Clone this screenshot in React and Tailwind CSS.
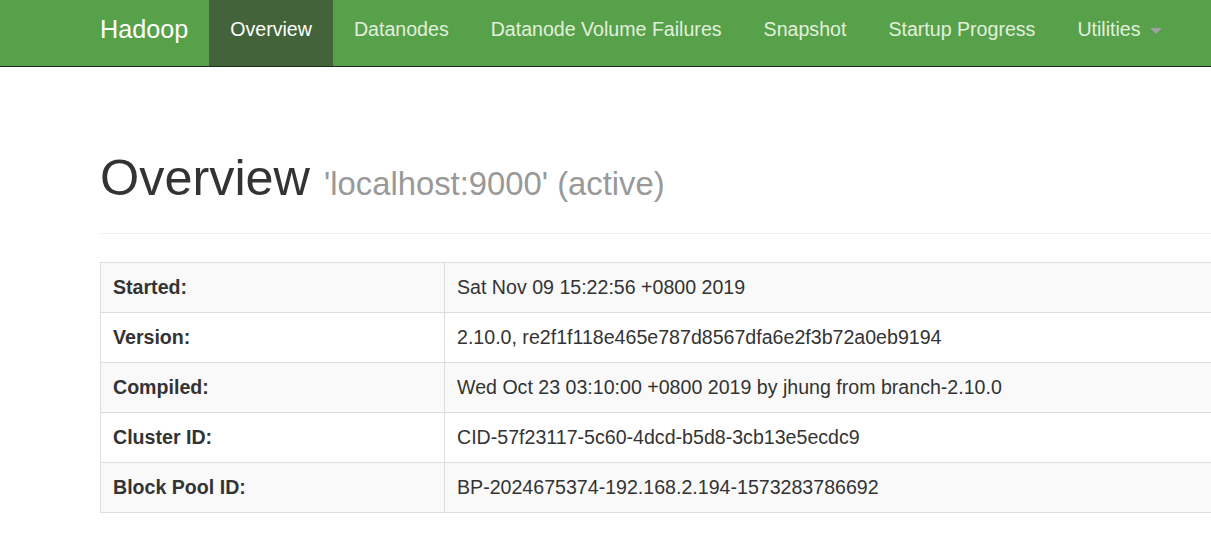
export default function App() {
  const rows = [
    ["Started:", "Sat Nov 09 15:22:56 +0800 2019"],
    ["Version:", "2.10.0, re2f1f118e465e787d8567dfa6e2f3b72a0eb9194"],
    ["Compiled:", "Wed Oct 23 03:10:00 +0800 2019 by jhung from branch-2.10.0"],
    ["Cluster ID:", "CID-57f23117-5c60-4dcd-b5d8-3cb13e5ecdc9"],
    ["Block Pool ID:", "BP-2024675374-192.168.2.194-1573283786692"],
  ];
  const nav = ["Datanodes", "Datanode Volume Failures", "Snapshot", "Startup Progress"];
  return (
    <div className="w-[1211px] h-[559px] overflow-hidden bg-white text-[#333] font-['Liberation_Sans',Arial,sans-serif]">
      <div className="h-[67px] bg-[#58a14b] border-b border-[#1e2a1b] flex pl-[100px]">
        <div className="h-[66px] flex items-center pb-[7px] text-[25.2px] text-white pr-[21px]">Hadoop</div>
        <div className="h-[66px] flex items-center pb-[7px] px-[21px] text-[19.6px] text-white bg-[#43643a]">Overview</div>
        {nav.map((n) => (
          <div key={n} className="h-[66px] flex items-center pb-[7px] px-[21px] text-[19.6px] text-[#e2efdc]">{n}</div>
        ))}
        <div className="h-[66px] flex items-center pb-[7px] px-[21px] text-[19.6px] text-[#e2efdc]">
          Utilities
          <span className="ml-[9px] mt-[3px] w-0 h-0 border-l-[6px] border-r-[6px] border-t-[6px] border-l-transparent border-r-transparent border-t-[#a0a0a0]"></span>
        </div>
      </div>
      <div className="pl-[100px]">
        <div className="pt-[83px] pb-[22px] border-b border-[#eee] w-[1200px]">
          <h1 className="text-[50.4px] leading-[55px] font-normal">
            Overview <span className="text-[32.8px] text-[#999]">'localhost:9000' (active)</span>
          </h1>
        </div>
        <table className="mt-[28px] w-[1200px] border border-[#ddd] border-collapse text-[19.6px]">
          <tbody>
            {rows.map(([k, v], i) => (
              <tr key={k} className={i % 2 === 0 ? "bg-[#f9f9f9]" : "bg-white"}>
                <th className="h-[50px] w-[344px] text-left font-bold px-[12px] border border-[#ddd] align-middle">{k}</th>
                <td className="h-[50px] px-[12px] border border-[#ddd] align-middle">{v}</td>
              </tr>
            ))}
          </tbody>
        </table>
      </div>
    </div>
  );
}
